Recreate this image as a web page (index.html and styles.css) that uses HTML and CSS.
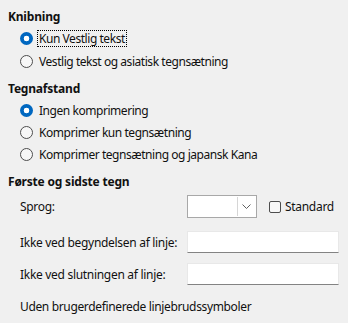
FILE: index.html
```html
<!DOCTYPE html>
<html lang="da">
<head>
	<meta charset="UTF-8">
	<title>Asiatisk typografi</title>
	<link rel="stylesheet" href="styles.css">
</head>
<body>
	<div class="page">
		<div class="group">
			<div class="title">Knibning</div>
			<label class="radio"><span class="dot on"></span><span class="txt focus">Kun Vestlig tekst</span></label>
			<label class="radio"><span class="dot"></span><span class="txt">Vestlig tekst og asiatisk tegnsætning</span></label>
		</div>
		<div class="group spacing">
			<div class="title">Tegnafstand</div>
			<label class="radio"><span class="dot on"></span><span class="txt">Ingen komprimering</span></label>
			<label class="radio"><span class="dot"></span><span class="txt">Komprimer kun tegnsætning</span></label>
			<label class="radio"><span class="dot"></span><span class="txt">Komprimer tegnsætning og japansk Kana</span></label>
		</div>
		<div class="group first">
			<div class="title">Første og sidste tegn</div>
			<div class="row lang">
				<span class="lbl">Sprog:</span>
				<div class="combo">
					<span class="combo-btn">
						<svg width="9" height="5" viewBox="0 0 9 5"><path d="M0.5 0.5 L4.5 4.5 L8.5 0.5" fill="none" stroke="#606060" stroke-width="1"/></svg>
					</span>
				</div>
				<label class="check"><span class="box"></span>Standard</label>
			</div>
			<div class="row field">
				<span class="lbl">Ikke ved begyndelsen af linje:</span>
				<div class="edit"></div>
			</div>
			<div class="row field">
				<span class="lbl">Ikke ved slutningen af linje:</span>
				<div class="edit"></div>
			</div>
			<div class="note">Uden brugerdefinerede linjebrudssymboler</div>
		</div>
	</div>
</body>
</html>
```

FILE: styles.css
```css
body{
	margin:0;
	background:#f0f0f0;
	font-family:"Noto Sans","Open Sans",sans-serif;
	font-size:12px;
	color:#111;
}
.page{
	width:348px;
	height:323px;
	padding:7px 0 0 8px;
	box-sizing:border-box;
	overflow:hidden;
}
.title{
	height:20px;
	line-height:20px;
	font-weight:bold;
	letter-spacing:-0.2px;
}
.radio{
	display:flex;
	align-items:center;
	height:23px;
	padding-left:12px;
}
.spacing{
	margin-top:6px;
}
.spacing .radio{
	height:22px;
}
.dot{
	width:13px;
	height:13px;
	border:1px solid #4d4d4d;
	border-radius:50%;
	box-sizing:border-box;
	background:#f7f7f7;
	margin-right:5px;
	flex:none;
}
.dot.on{
	border:none;
	background:radial-gradient(circle,#fff 0 2.6px,#0067c0 3.1px);
}
.txt{
	line-height:15px;
	padding:0 1px;
	letter-spacing:-0.45px;
	border:1px solid transparent;
	margin-left:-1px;
}
.txt.focus{
	border:1px dotted #000;
}
.first{
	margin-top:7px;
}
.row{
	display:flex;
	align-items:center;
	padding-left:12px;
	letter-spacing:-0.3px;
}
.lbl{
	width:167px;
	flex:none;
}
.lang{
	height:29px;
	margin-bottom:5px;
}
.combo{
	width:70px;
	height:23px;
	border:1px solid #a8a8a8;
	background:#fff;
	box-sizing:border-box;
	display:flex;
	justify-content:flex-end;
	padding:1px;
}
.combo-btn{
	width:17px;
	border-left:1px solid #d6d6d6;
	display:flex;
	align-items:center;
	justify-content:center;
}
.check{
	display:flex;
	align-items:center;
	margin-left:12px;
}
.box{
	width:12px;
	height:12px;
	border:1px solid #4d4d4d;
	border-radius:2px;
	box-sizing:border-box;
	background:#f7f7f7;
	margin-right:4px;
}
.field{
	height:32px;
}
.edit{
	width:152px;
	height:22px;
	background:#fff;
	border:1px solid #e8e8e8;
	border-bottom:1px solid #838383;
	box-sizing:border-box;
}
.note{
	margin-top:7px;
	padding-left:12px;
	height:20px;
	line-height:20px;
	letter-spacing:-0.35px;
}
```
